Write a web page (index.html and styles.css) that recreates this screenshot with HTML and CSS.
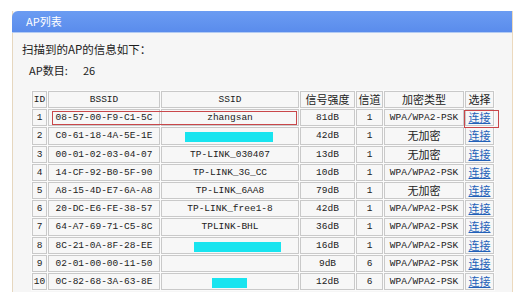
FILE: index.html
```html
<!DOCTYPE html>
<html lang="zh-CN">
<head>
    <meta charset="UTF-8">
    <meta name="viewport" content="width=device-width, initial-scale=1.0">
    <title>AP列表</title>
    <link rel="stylesheet" href="styles.css">
</head>
<body>
  <div class="panel">
    <div class="panel-title">AP列表</div>
    <div class="intro">扫描到的AP的信息如下：</div>
    <div class="count"><span class="count-label">AP数目:</span><span class="count-num">26</span></div>

    <div class="table-wrap">
      <table class="ap-list">
        <tr>
          <th class="c-id mono">ID</th>
          <th class="c-bssid mono">BSSID</th>
          <th class="c-ssid mono">SSID</th>
          <th class="c-sig">信号强度</th>
          <th class="c-ch">信道</th>
          <th class="c-enc">加密类型</th>
          <th class="c-sel">选择</th>
        </tr>
        <tr>
          <td class="mono">1</td>
          <td class="mono">08-57-00-F9-C1-5C</td>
          <td class="mono">zhangsan</td>
          <td class="mono">81dB</td>
          <td class="mono">1</td>
          <td class="mono">WPA/WPA2-PSK</td>
          <td><a href="#">连接</a></td>
        </tr>
        <tr>
          <td class="mono">2</td>
          <td class="mono">C0-61-18-4A-5E-1E</td>
          <td><span class="mask mask-a"></span></td>
          <td class="mono">42dB</td>
          <td class="mono">1</td>
          <td>无加密</td>
          <td><a href="#">连接</a></td>
        </tr>
        <tr>
          <td class="mono">3</td>
          <td class="mono">00-01-02-03-04-07</td>
          <td class="mono">TP-LINK_030407</td>
          <td class="mono">13dB</td>
          <td class="mono">1</td>
          <td>无加密</td>
          <td><a href="#">连接</a></td>
        </tr>
        <tr>
          <td class="mono">4</td>
          <td class="mono">14-CF-92-B0-5F-90</td>
          <td class="mono">TP-LINK_3G_CC</td>
          <td class="mono">10dB</td>
          <td class="mono">1</td>
          <td class="mono">WPA/WPA2-PSK</td>
          <td><a href="#">连接</a></td>
        </tr>
        <tr>
          <td class="mono">5</td>
          <td class="mono">A8-15-4D-E7-6A-A8</td>
          <td class="mono">TP-LINK_6AA8</td>
          <td class="mono">79dB</td>
          <td class="mono">1</td>
          <td>无加密</td>
          <td><a href="#">连接</a></td>
        </tr>
        <tr>
          <td class="mono">6</td>
          <td class="mono">20-DC-E6-FE-38-57</td>
          <td class="mono">TP-LINK_free1-8</td>
          <td class="mono">42dB</td>
          <td class="mono">1</td>
          <td class="mono">WPA/WPA2-PSK</td>
          <td><a href="#">连接</a></td>
        </tr>
        <tr>
          <td class="mono">7</td>
          <td class="mono">64-A7-69-71-C5-8C</td>
          <td class="mono">TPLINK-BHL</td>
          <td class="mono">36dB</td>
          <td class="mono">1</td>
          <td class="mono">WPA/WPA2-PSK</td>
          <td><a href="#">连接</a></td>
        </tr>
        <tr>
          <td class="mono">8</td>
          <td class="mono">8C-21-0A-8F-28-EE</td>
          <td><span class="mask mask-b"></span></td>
          <td class="mono">16dB</td>
          <td class="mono">1</td>
          <td class="mono">WPA/WPA2-PSK</td>
          <td><a href="#">连接</a></td>
        </tr>
        <tr>
          <td class="mono">9</td>
          <td class="mono">02-01-00-00-11-50</td>
          <td></td>
          <td class="mono">9dB</td>
          <td class="mono">6</td>
          <td class="mono">WPA/WPA2-PSK</td>
          <td><a href="#">连接</a></td>
        </tr>
        <tr>
          <td class="mono">10</td>
          <td class="mono">0C-82-68-3A-63-8E</td>
          <td><span class="mask mask-c"></span></td>
          <td class="mono">12dB</td>
          <td class="mono">6</td>
          <td class="mono">WPA/WPA2-PSK</td>
          <td><a href="#">连接</a></td>
        </tr>
      </table>
      <!-- red marks drawn over row 1 -->
      <div class="mark mark-row"></div>
      <div class="mark mark-link"></div>
    </div>
  </div>
</body>
</html>
```

FILE: styles.css
```css
*{
    box-sizing: border-box;
}
body{
    margin: 0;
    background-color: #ffffff;
    font-family: "Noto Sans CJK SC", "Noto Sans", sans-serif;
    color: #222;
}
.panel{
    margin: 11px 0 0 12px;
    width: 501px;
    height: 281px;
    background-color: #f6f6f6;
    border-left: 1px solid #e6d7bf;
    border-right: 1px solid #ecd9bd;
    display: flex;
    flex-direction: column;
}
.panel-title{
    height: 22px;
    padding-left: 14px;
    background: linear-gradient(#6b9cf2, #5a8cec);
    border-bottom: 1px solid #b3cbf3;
    border-top-left-radius: 6px;
    color: #fff;
    font-size: 11px;
    line-height: 21px;
    margin-left: -1px;
}
.intro{
    margin-top: 8px;
    padding-left: 9px;
    font-size: 11.5px;
    line-height: 16px;
    color: #1c1c1c;
}
.count{
    margin-top: 5px;
    padding-left: 16px;
    font-size: 11px;
    line-height: 16px;
    display: flex;
}
.count-label{
    width: 54px;
}
.table-wrap{
    position: relative;
    margin: 12px 0 0 18px;
}
.ap-list{
    border-collapse: separate;
    border-spacing: 1px;
    table-layout: fixed;
    width: 464px;
    background-color: #fbfbfb;
}
.ap-list th,
.ap-list td{
    height: 17.2px;
    padding: 0;
    border: 1px solid #c9c9c9;
    background-color: #f7f7f7;
    text-align: center;
    font-size: 11px;
    font-weight: normal;
    line-height: 15px;
    white-space: nowrap;
    overflow: hidden;
    color: #222;
}
.ap-list .mono{
    font-family: "Liberation Mono", monospace;
    font-size: 9.5px;
}
.c-id{ width: 15px; }
.c-bssid{ width: 112px; }
.c-ssid{ width: 138px; }
.c-sig{ width: 55px; }
.c-ch{ width: 27px; }
.c-enc{ width: 80px; }
.c-sel{ width: 29px; }
.ap-list a{
    color: #2160b8;
    text-decoration: underline;
}
.mask{
    display: inline-block;
    height: 10px;
    vertical-align: middle;
    background-color: #19e4ef;
}
.mask-a{
    width: 88px;
    margin-right: 2px;
}
.mask-b{
    width: 87px;
    margin-left: 15px;
}
.mask-c{
    width: 35px;
    margin-right: 1px;
}
.mark{
    position: absolute;
    border: 1px solid #c9474a;
}
.mark-row{
    left: 21px;
    top: 21px;
    width: 245px;
    height: 14px;
}
.mark-link{
    left: 433px;
    top: 20px;
    width: 35px;
    height: 18px;
}
```
